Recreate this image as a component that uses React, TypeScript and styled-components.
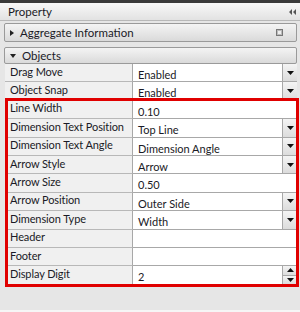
import React from "react";
import styled, { createGlobalStyle } from "styled-components";

const Global = createGlobalStyle`
  html, body { margin: 0; padding: 0; background: #e6e6e6; }
  body { font-family: Lato, "Noto Sans", "DejaVu Sans", sans-serif; font-size: 11px; color: #1a1a26; }
`;

const Panel = styled.div`
  width: 300px;
  height: 312px;
  display: flex;
  flex-direction: column;
  background: #e6e6e6;
  box-sizing: border-box;
  border-bottom: 2px solid #f6f6f6;
  position: relative;
  overflow: hidden;
`;

const TopStrip = styled.div`
  height: 3px;
  background: #3a3a3a;
  flex: none;
`;

const TitleBar = styled.div`
  height: 17px;
  flex: none;
  display: flex;
  align-items: center;
  justify-content: space-between;
  padding: 0 3px 0 8px;
  background: linear-gradient(#f8f8f8, #e2e2e2);
  border-bottom: 1px solid #b8b8b8;
  font-size: 11.5px;
`;

const Body = styled.div`
  flex: 1;
  display: flex;
  flex-direction: column;
  padding: 2px 3px 0 4px;
`;

const SectionHeader = styled.div<{ $h: number; $mb: number }>`
  height: ${(p) => p.$h}px;
  margin-bottom: ${(p) => p.$mb}px;
  box-sizing: border-box;
  display: flex;
  align-items: center;
  padding: 0 13px 0 5px;
  background: linear-gradient(#f4f4f4, #dadada);
  border: 1px solid #9a9a9a;
  border-radius: 2px;
  font-size: 11.5px;
  gap: 6px;
`;

const HeaderText = styled.span`
  flex: 1;
`;

const Grid = styled.div`
  margin-left: 1px;
  display: flex;
  flex-direction: column;
  background: #fff;
`;

const Row = styled.div`
  height: 18.4px;
  display: grid;
  grid-template-columns: 128px 1fr;
  box-sizing: border-box;
`;

const Label = styled.div`
  background: #f0f0f0;
  border-right: 1px solid #a8a8a8;
  border-bottom: 1px solid #b8b8b8;
  display: flex;
  align-items: center;
  padding-left: 5px;
  padding-bottom: 3px;
  white-space: nowrap;
  overflow: hidden;
  letter-spacing: -0.1px;
`;

const Value = styled.div`
  display: flex;
  align-items: stretch;
  border-bottom: 1px solid #a8a8a8;
  min-width: 0;
`;

const ValueText = styled.span`
  flex: 1;
  padding: 4px 0 0 5px;
  white-space: nowrap;
  font-size: 11px;
`;

const DropButton = styled.div`
  width: 14px;
  border-left: 1px solid #a8a8a8;
  background: linear-gradient(#f4f4f4, #dcdcdc);
  display: flex;
  align-items: center;
  justify-content: center;
`;

const SpinBox = styled.div`
  width: 14px;
  display: flex;
  flex-direction: column;
  border-left: 1px solid #a8a8a8;
`;

const SpinHalf = styled.div`
  flex: 1;
  background: linear-gradient(#f4f4f4, #dcdcdc);
  display: flex;
  align-items: center;
  justify-content: center;
  & + & { border-top: 1px solid #a8a8a8; }
`;

const Highlight = styled.div`
  position: absolute;
  left: 5px;
  top: 98px;
  width: 294px;
  height: 189px;
  box-sizing: border-box;
  border: 3px solid #e00000;
  pointer-events: none;
`;

const Down = () => (
  <svg width="7" height="4" viewBox="0 0 7 4"><path d="M0 0H7L3.5 4Z" fill="#111" /></svg>
);
const Up = () => (
  <svg width="7" height="4" viewBox="0 0 7 4"><path d="M0 4H7L3.5 0Z" fill="#111" /></svg>
);

type Kind = "drop" | "none" | "spin";
const rows: [string, string, Kind][] = [
  ["Drag Move", "Enabled", "drop"],
  ["Object Snap", "Enabled", "drop"],
  ["Line Width", "0.10", "none"],
  ["Dimension Text Position", "Top Line", "drop"],
  ["Dimension Text Angle", "Dimension Angle", "drop"],
  ["Arrow Style", "Arrow", "drop"],
  ["Arrow Size", "0.50", "none"],
  ["Arrow Position", "Outer Side", "drop"],
  ["Dimension Type", "Width", "drop"],
  ["Header", "", "none"],
  ["Footer", "", "none"],
  ["Display Digit", "2", "spin"],
];

export default function App() {
  return (
    <>
      <Global />
      <Panel>
        <TopStrip />
        <TitleBar>
          <span>Property</span>
          <svg width="8" height="6" viewBox="0 0 8 6">
            <path d="M0 3L3 0V6Z M4 3L7 0V6Z" fill="#555" />
          </svg>
        </TitleBar>
        <Body>
          <SectionHeader $h={19} $mb={5}>
            <svg width="4" height="6" viewBox="0 0 4 6"><path d="M0 0L4 3L0 6Z" fill="#222" /></svg>
            <HeaderText>Aggregate Information</HeaderText>
            <svg width="7" height="7" viewBox="0 0 7 7">
              <rect x="0.5" y="0.5" width="6" height="6" fill="#bbb" stroke="#777" />
              <rect x="2" y="2" width="3" height="3" fill="#eee" />
            </svg>
          </SectionHeader>
          <SectionHeader $h={17} $mb={0}>
            <svg width="6" height="4" viewBox="0 0 6 4"><path d="M0 0H6L3 4Z" fill="#222" /></svg>
            <HeaderText>Objects</HeaderText>
          </SectionHeader>
          <Grid>
            {rows.map(([l, v, k]) => (
              <Row key={l}>
                <Label>{l}</Label>
                <Value>
                  <ValueText>{v}</ValueText>
                  {k === "drop" && (
                    <DropButton>
                      <Down />
                    </DropButton>
                  )}
                  {k === "spin" && (
                    <SpinBox>
                      <SpinHalf><Up /></SpinHalf>
                      <SpinHalf><Down /></SpinHalf>
                    </SpinBox>
                  )}
                </Value>
              </Row>
            ))}
          </Grid>
        </Body>
        <Highlight />
      </Panel>
    </>
  );
}
